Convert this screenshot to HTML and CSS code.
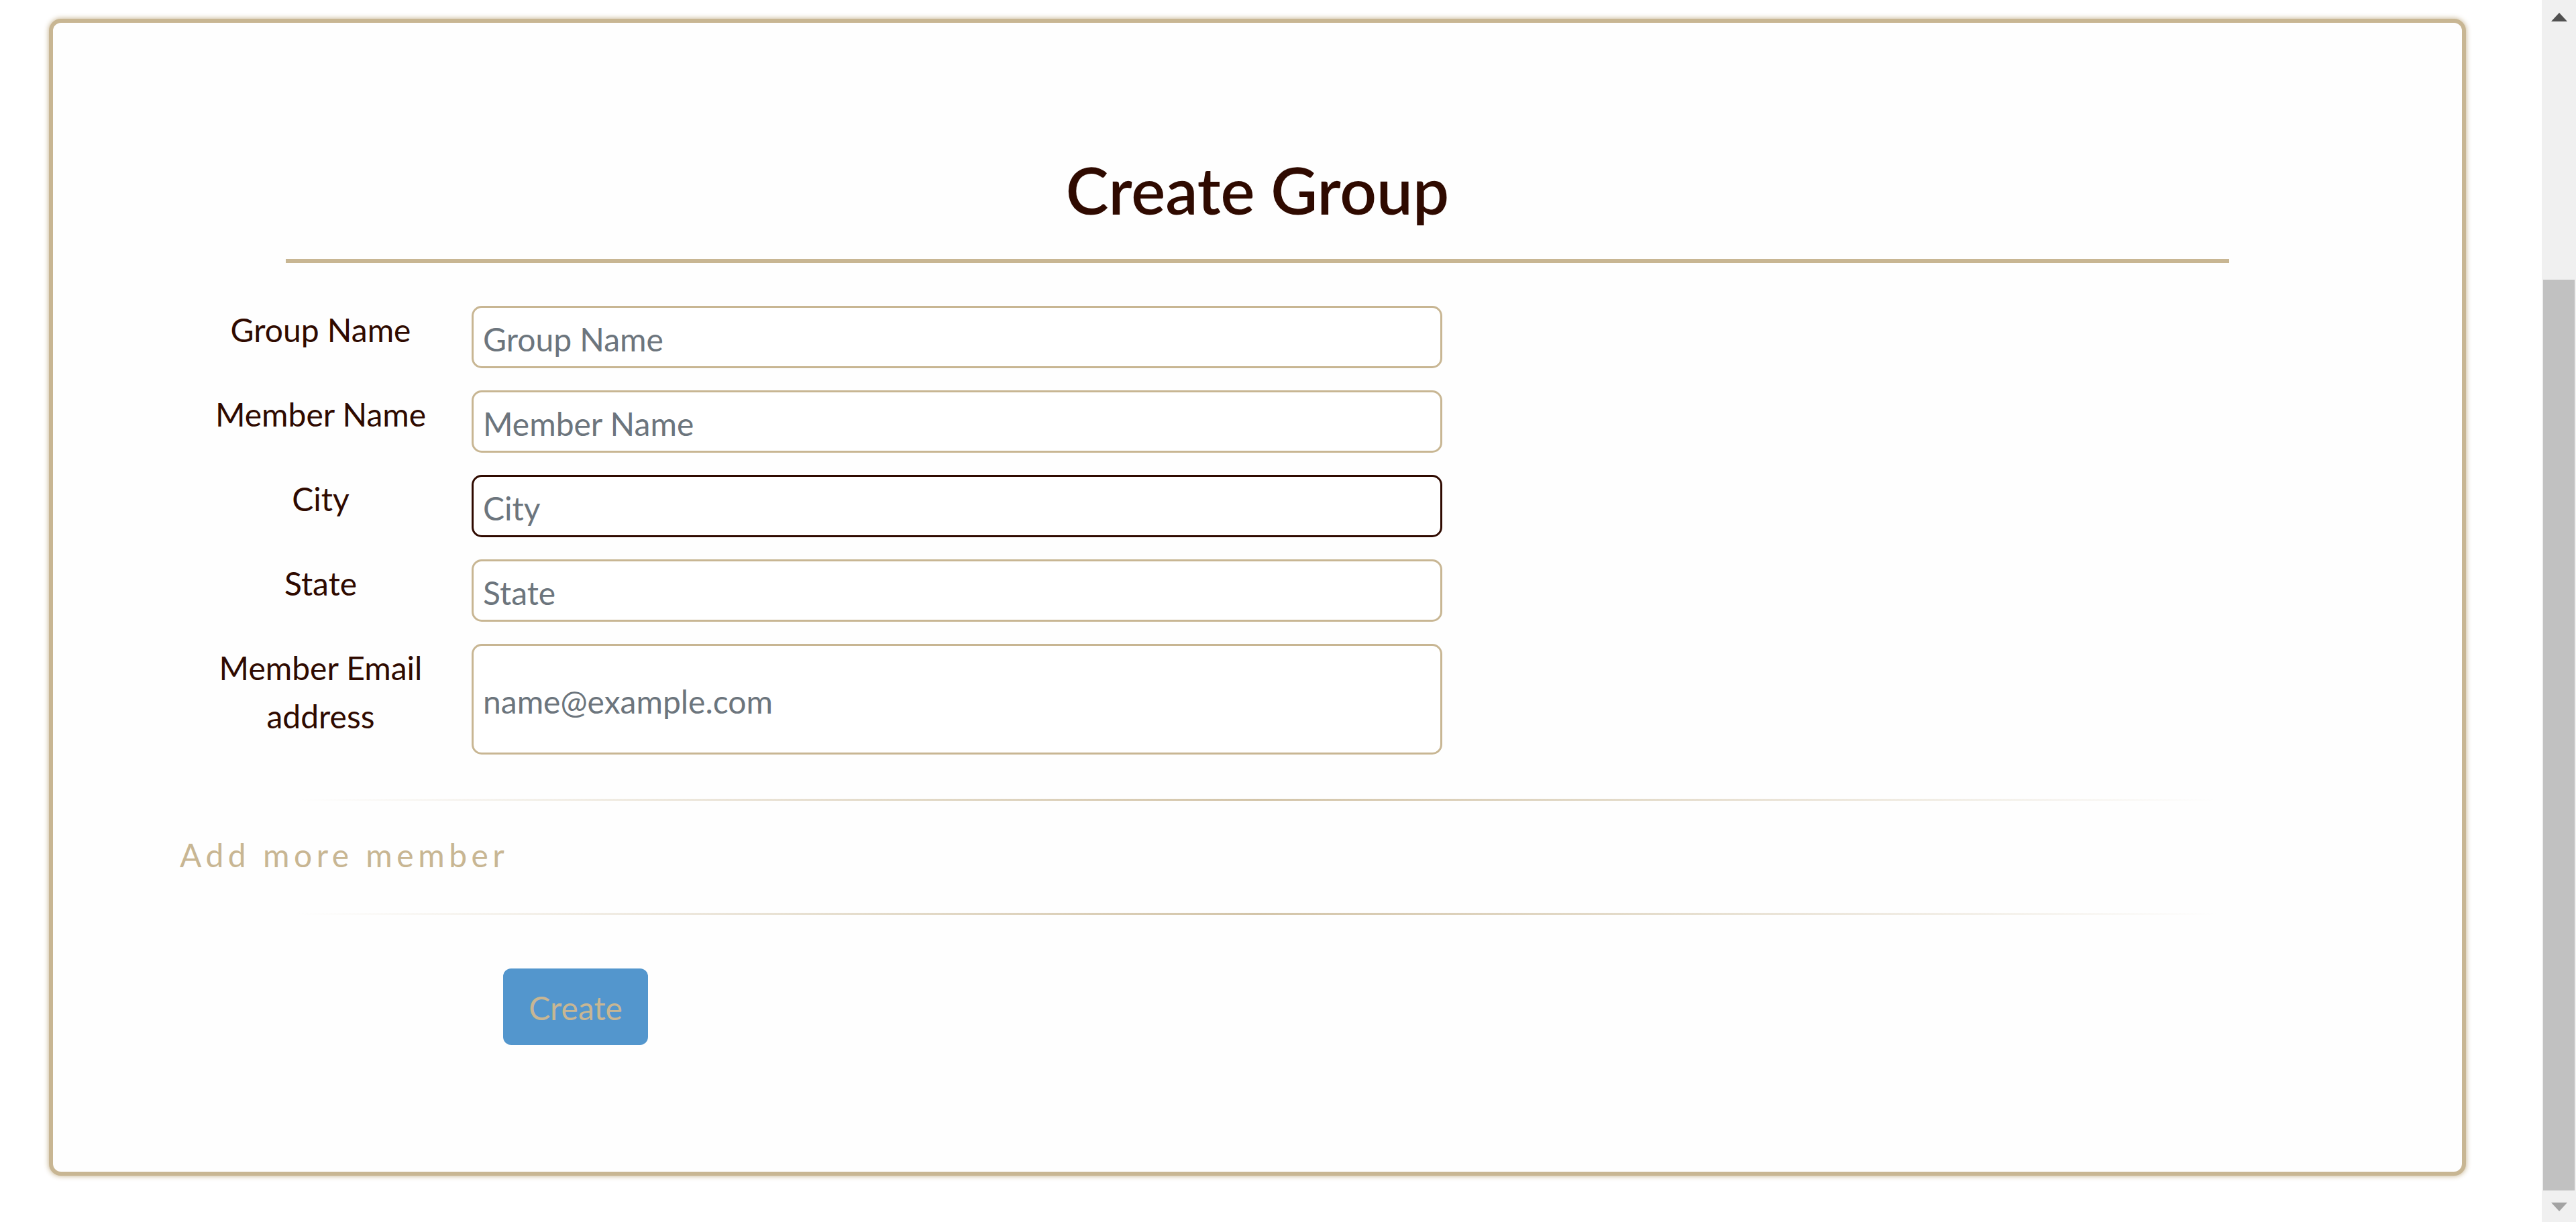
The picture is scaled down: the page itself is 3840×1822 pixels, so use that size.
FILE: index.html
```html
<!DOCTYPE html>
<html lang="en">
<head>
<meta charset="utf-8">
<title>Create Group</title>
<link rel="stylesheet" href="styles.css">
</head>
<body>
<div class="page">
  <main class="viewport">
    <section class="card">
      <h2 class="title">Create Group</h2>
      <form class="form">
        <div class="fields">
          <label class="field-label" for="groupName">Group Name</label>
          <input class="field-input" id="groupName" type="text" placeholder="Group Name">

          <label class="field-label" for="memberName">Member Name</label>
          <input class="field-input" id="memberName" type="text" placeholder="Member Name">

          <label class="field-label" for="city">City</label>
          <input class="field-input field-input--active" id="city" type="text" placeholder="City">

          <label class="field-label" for="state">State</label>
          <input class="field-input" id="state" type="text" placeholder="State">

          <label class="field-label" for="email">Member Email address</label>
          <input class="field-input field-input--tall" id="email" type="email" placeholder="name@example.com">
        </div>
        <hr class="fade-rule">
        <a class="add-member">Add more member</a>
        <hr class="fade-rule">
        <button class="btn-create" type="button">Create</button>
      </form>
    </section>
  </main>
  <div class="scrollbar">
    <div class="scrollbar-btn"><span class="arrow-up"></span></div>
    <div class="scrollbar-track"><div class="scrollbar-thumb"></div></div>
    <div class="scrollbar-btn scrollbar-btn--bottom"><span class="arrow-down"></span></div>
  </div>
</div>
</body>
</html>
```

FILE: styles.css
```css
* {
  box-sizing: border-box;
}

html, body {
  margin: 0;
  padding: 0;
  background: #ffffff;
}

body {
  font-family: Lato, "Open Sans", "Liberation Sans", sans-serif;
  color: #2f0a00;
}

.page {
  display: flex;
  width: 100%;
  height: 1822px;
  overflow: hidden;
}

.viewport {
  flex: 1;
  min-width: 0;
}

.card {
  width: 3603px;
  margin: 28px 0 0 73px;
  border: 6px solid #c8b693;
  border-radius: 18px;
  box-shadow: 0 0 7px 1px rgba(200, 182, 147, 0.9);
  background: #fefefe;
  padding: 191px 0 189px;
}

.title {
  margin: 0 347px 64px;
  padding-bottom: 46px;
  border-bottom: 6px solid #c8b693;
  font-size: 96px;
  line-height: 115px;
  font-weight: 600;
  text-align: center;
  color: #2f0a00;
}

.form {
  margin: 0;
}

.fields {
  display: grid;
  grid-template-columns: 330px 1447px;
  grid-template-rows: 93px 93px 93px 93px 165px;
  column-gap: 60px;
  row-gap: 33px;
  margin-left: 234px;
}

.field-label {
  align-self: start;
  font-size: 48px;
  line-height: 72px;
  text-align: center;
  color: #2f0a00;
}

.field-input {
  width: 100%;
  height: 100%;
  margin: 0;
  border: 3px solid #c8b693;
  border-radius: 15px;
  padding: 5px 14px 0;
  font-family: Lato, "Open Sans", "Liberation Sans", sans-serif;
  font-size: 48px;
  color: #495057;
  background: #ffffff;
  outline: none;
}

.field-input::placeholder {
  color: #6c757d;
  opacity: 1;
}

.field-input--active {
  border-color: #2f0a00;
}

.fade-rule {
  height: 3px;
  border: 0;
  margin: 0 362px;
  background: linear-gradient(to right, rgba(200, 182, 147, 0), rgba(200, 182, 147, 0.8), rgba(200, 182, 147, 0));
}

.fields + .fade-rule {
  margin-top: 66px;
}

.add-member {
  display: block;
  margin: 45px 0 50px 189px;
  font-size: 48px;
  line-height: 72px;
  letter-spacing: 6.5px;
  color: #c8b693;
  cursor: pointer;
}

.btn-create {
  display: flex;
  align-items: center;
  justify-content: center;
  width: 216px;
  height: 114px;
  margin: 80px 0 0 671px;
  padding: 3px 0 0;
  border: 0;
  border-radius: 12px;
  background: #5396cd;
  color: #c8b693;
  font-family: Lato, "Open Sans", "Liberation Sans", sans-serif;
  font-size: 48px;
  line-height: 72px;
}

.scrollbar {
  width: 51px;
  flex: 0 0 51px;
  display: flex;
  flex-direction: column;
  background: #f0f0f0;
}

.scrollbar-btn {
  height: 51px;
  flex: 0 0 51px;
  display: flex;
  justify-content: center;
  padding-top: 19px;
}

.scrollbar-btn--bottom {
  height: 47px;
  flex: 0 0 47px;
  padding-top: 18px;
}

.arrow-up {
  width: 0;
  height: 0;
  border-left: 12.5px solid transparent;
  border-right: 12.5px solid transparent;
  border-bottom: 13px solid #505050;
}

.arrow-down {
  width: 0;
  height: 0;
  border-left: 12.5px solid transparent;
  border-right: 12.5px solid transparent;
  border-top: 13px solid #a3a3a3;
}

.scrollbar-track {
  flex: 1;
  display: flex;
  flex-direction: column;
  justify-content: flex-end;
}

.scrollbar-thumb {
  height: 1358px;
  margin: 0 2px;
  background: #c1c1c1;
}
```
